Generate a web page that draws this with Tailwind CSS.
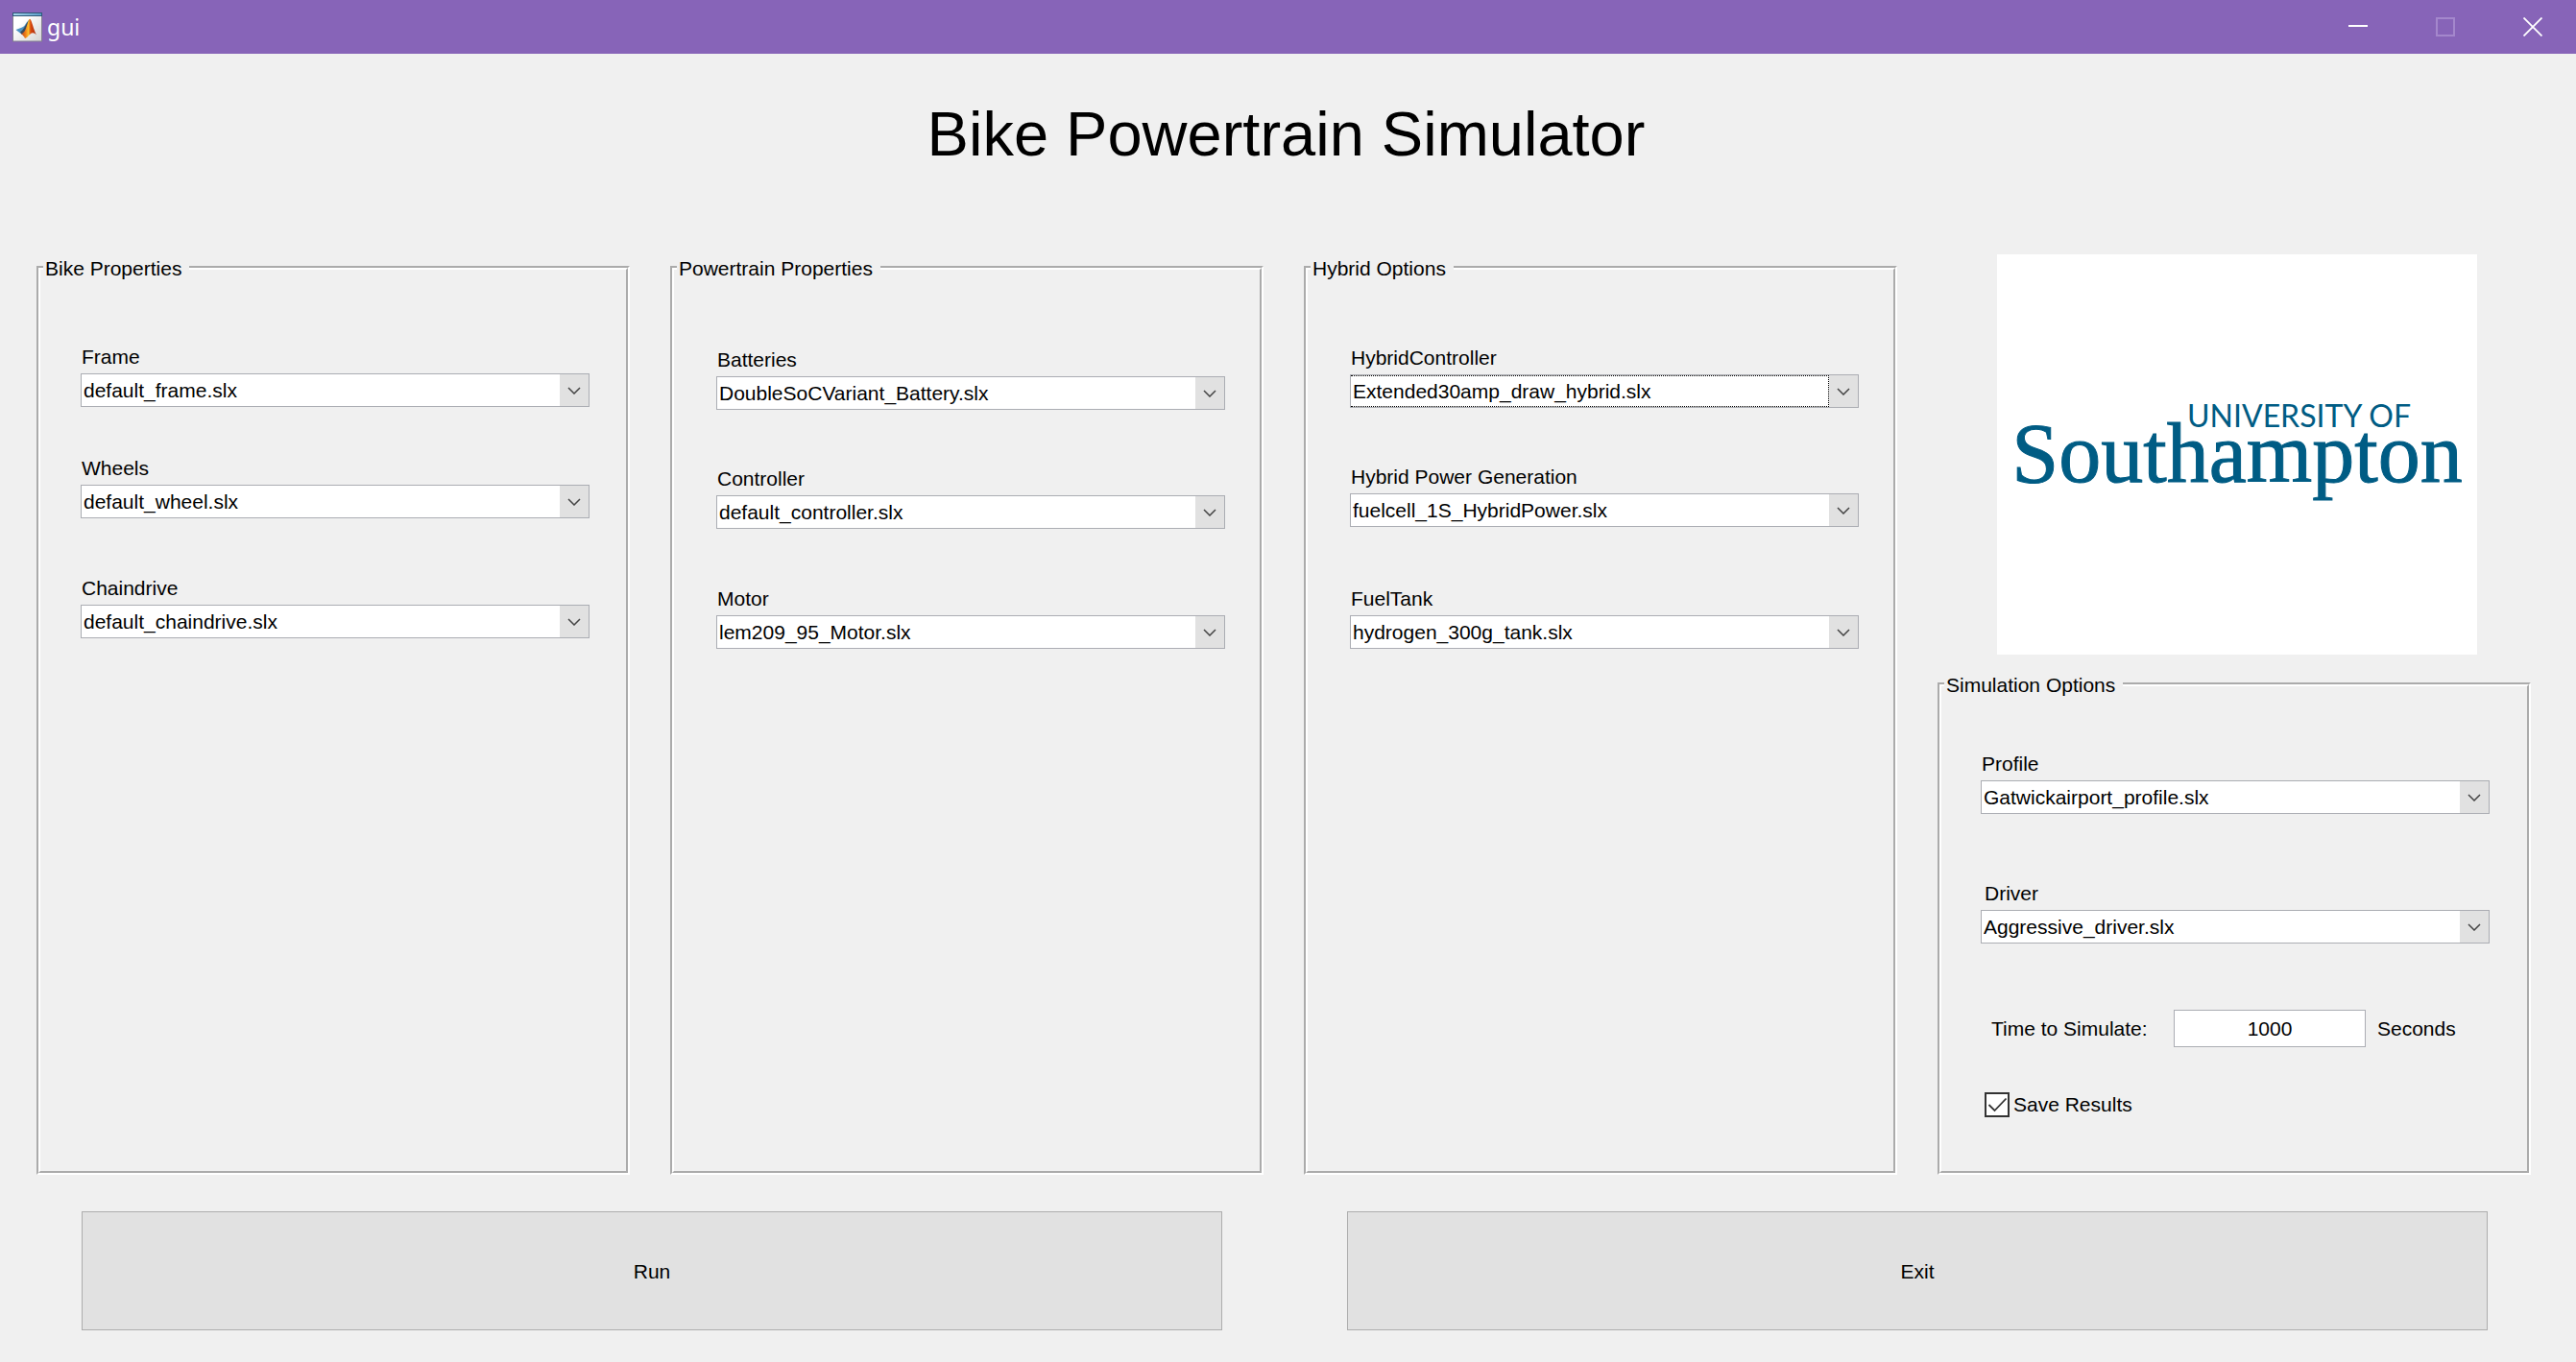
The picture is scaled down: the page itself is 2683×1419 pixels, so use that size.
<!DOCTYPE html>
<html lang="en">
<head>
<meta charset="utf-8">
<title>gui</title>
<script src="https://cdn.jsdelivr.net/npm/@tailwindcss/browser@4"></script>
</head>
<body class="flex min-h-screen flex-col bg-[#f0f0f0] font-['Liberation_Sans',Arial,sans-serif] text-[21px] leading-6 text-black">

<svg class="hidden" aria-hidden="true">
  <symbol id="chevron" viewBox="0 0 14 8"><path d="M1 1l6 6 6-6" fill="none" stroke="#444" stroke-width="1.5"/></symbol>
</svg>

<header class="flex h-14 items-center bg-[#8764b8] pl-[13px] text-white">
  <svg class="size-[31px]" viewBox="0 0 31 31" aria-hidden="true">
    <defs>
      <linearGradient id="paper" x1="0" y1="0" x2="1" y2="1"><stop offset=".3" stop-color="#fff"/><stop offset="1" stop-color="#d4d4d4"/></linearGradient>
      <linearGradient id="flame" x1="0" y1="0" x2="1" y2="0"><stop offset="0" stop-color="#b8401a"/><stop offset=".3" stop-color="#f0801a"/><stop offset=".48" stop-color="#fbc02c"/><stop offset=".62" stop-color="#d9480f"/><stop offset="1" stop-color="#a32a10"/></linearGradient>
      <linearGradient id="bar" x1="0" y1="0" x2="1" y2="0"><stop offset="0" stop-color="#a5d3ea"/><stop offset="1" stop-color="#5b9dc9"/></linearGradient>
    </defs>
    <rect x=".5" y=".5" width="30" height="29.5" fill="url(#paper)" stroke="#83808f"/>
    <rect x="0" y="0" width="31" height="4" fill="#2f5878"/>
    <rect x="1" y="1" width="29" height="2" fill="url(#bar)"/>
    <path d="M3.500 18l6.500-2.500c2-.5 3-2.500 5-5.500l3-3-5 13-3 3z" fill="#4b93c4"/>
    <path d="M8 20.500c3-2 5-6 7-9.500l3-4-5 14-3 2z" fill="#3a4a5c"/>
    <path d="M9 22.500c4-1.500 5-6 6.500-10.500 1-3 1.500-5.300 2.500-5.300s2 3.300 3 6.300 2 7 4 10.500c-2-2.500-4.500-3-6.500-1-2 1.500-3 4-5.500 4.500-1-2-2-3.500-4-4.500z" fill="url(#flame)"/>
  </svg>
  <span class="ml-[5px] font-['Noto_Sans',sans-serif] text-[23px] leading-8">gui</span>
  <div class="ml-auto flex self-stretch">
    <button type="button" aria-label="Minimize" class="flex w-[91px] items-center justify-center">
      <svg class="size-5" viewBox="0 0 20 20"><path d="M0 9h20" stroke="#fff" stroke-width="2"/></svg>
    </button>
    <button type="button" aria-label="Maximize" disabled class="flex w-[91px] items-center justify-center">
      <svg class="size-5" viewBox="0 0 20 20"><path d="M1 1h18v18H1z" fill="none" stroke="#a487cc" stroke-width="2"/></svg>
    </button>
    <button type="button" aria-label="Close" class="flex w-[91px] items-center justify-center">
      <svg class="size-5" viewBox="0 0 20 20"><path d="M.5.5l19 19M19.500.5l-19 19" stroke="#fff" stroke-width="1.800"/></svg>
    </button>
  </div>
</header>

<h1 class="mt-12 pr-1 text-center text-[65px] leading-[72px]">Bike Powertrain Simulator</h1>

<main class="mt-[89px] grid flex-1 grid-cols-4 gap-x-[42px] pr-[47px] pl-[38px]">

  <fieldset class="mt-px min-w-0 border-4 border-white [border-style:groove]">
    <legend class="ml-[3px] pt-0.5 pr-2 pl-0.5">Bike Properties</legend>
    <div class="flex flex-col pt-[68px] pr-[38px] pl-[42px]">
      <div class="flex flex-col gap-[5px]">
        <label for="frame" class="pl-px">Frame</label>
        <div class="grid">
          <select id="frame" class="col-start-1 row-start-1 h-[35px] appearance-none border border-[#abadb3] bg-white pl-0.5"><option>default_frame.slx</option></select>
          <span class="pointer-events-none col-start-1 row-start-1 my-px mr-px flex w-[30px] items-center justify-center justify-self-end bg-[#e1e1e1]"><svg class="h-2 w-3.5"><use href="#chevron"/></svg></span>
        </div>
      </div>
      <div class="mt-13 flex flex-col gap-[5px]">
        <label for="wheels" class="pl-px">Wheels</label>
        <div class="grid">
          <select id="wheels" class="col-start-1 row-start-1 h-[35px] appearance-none border border-[#abadb3] bg-white pl-0.5"><option>default_wheel.slx</option></select>
          <span class="pointer-events-none col-start-1 row-start-1 my-px mr-px flex w-[30px] items-center justify-center justify-self-end bg-[#e1e1e1]"><svg class="h-2 w-3.5"><use href="#chevron"/></svg></span>
        </div>
      </div>
      <div class="mt-[61px] flex flex-col gap-[5px]">
        <label for="chaindrive" class="pl-px">Chaindrive</label>
        <div class="grid">
          <select id="chaindrive" class="col-start-1 row-start-1 h-[35px] appearance-none border border-[#abadb3] bg-white pl-0.5"><option>default_chaindrive.slx</option></select>
          <span class="pointer-events-none col-start-1 row-start-1 my-px mr-px flex w-[30px] items-center justify-center justify-self-end bg-[#e1e1e1]"><svg class="h-2 w-3.5"><use href="#chevron"/></svg></span>
        </div>
      </div>
    </div>
  </fieldset>

  <fieldset class="mt-px min-w-0 border-4 border-white [border-style:groove]">
    <legend class="ml-[3px] pt-0.5 pr-2 pl-0.5">Powertrain Properties</legend>
    <div class="flex flex-col pt-[71px] pr-9 pl-11">
      <div class="flex flex-col gap-[5px]">
        <label for="batteries" class="pl-px">Batteries</label>
        <div class="grid">
          <select id="batteries" class="col-start-1 row-start-1 h-[35px] appearance-none border border-[#abadb3] bg-white pl-0.5"><option>DoubleSoCVariant_Battery.slx</option></select>
          <span class="pointer-events-none col-start-1 row-start-1 my-px mr-px flex w-[30px] items-center justify-center justify-self-end bg-[#e1e1e1]"><svg class="h-2 w-3.5"><use href="#chevron"/></svg></span>
        </div>
      </div>
      <div class="mt-15 flex flex-col gap-[5px]">
        <label for="controller" class="pl-px">Controller</label>
        <div class="grid">
          <select id="controller" class="col-start-1 row-start-1 h-[35px] appearance-none border border-[#abadb3] bg-white pl-0.5"><option>default_controller.slx</option></select>
          <span class="pointer-events-none col-start-1 row-start-1 my-px mr-px flex w-[30px] items-center justify-center justify-self-end bg-[#e1e1e1]"><svg class="h-2 w-3.5"><use href="#chevron"/></svg></span>
        </div>
      </div>
      <div class="mt-[61px] flex flex-col gap-[5px]">
        <label for="motor" class="pl-px">Motor</label>
        <div class="grid">
          <select id="motor" class="col-start-1 row-start-1 h-[35px] appearance-none border border-[#abadb3] bg-white pl-0.5"><option>lem209_95_Motor.slx</option></select>
          <span class="pointer-events-none col-start-1 row-start-1 my-px mr-px flex w-[30px] items-center justify-center justify-self-end bg-[#e1e1e1]"><svg class="h-2 w-3.5"><use href="#chevron"/></svg></span>
        </div>
      </div>
    </div>
  </fieldset>

  <fieldset class="mt-px min-w-0 border-4 border-white [border-style:groove]">
    <legend class="ml-[3px] pt-0.5 pr-2 pl-0.5">Hybrid Options</legend>
    <div class="flex flex-col pt-[69px] pr-9 pl-11">
      <div class="flex flex-col gap-[5px]">
        <label for="hybrid-controller" class="pl-px">HybridController</label>
        <div class="grid">
          <select id="hybrid-controller" class="col-start-1 row-start-1 h-[35px] appearance-none border border-[#abadb3] bg-white pl-0.5"><option>Extended30amp_draw_hybrid.slx</option></select>
          <span class="pointer-events-none col-start-1 row-start-1 my-px mr-[31px] ml-px border border-l-0 border-dotted border-black"></span>
          <span class="pointer-events-none col-start-1 row-start-1 my-px mr-px flex w-[30px] items-center justify-center justify-self-end bg-[#e1e1e1]"><svg class="h-2 w-3.5"><use href="#chevron"/></svg></span>
        </div>
      </div>
      <div class="mt-15 flex flex-col gap-[5px]">
        <label for="power-generation" class="pl-px">Hybrid Power Generation</label>
        <div class="grid">
          <select id="power-generation" class="col-start-1 row-start-1 h-[35px] appearance-none border border-[#abadb3] bg-white pl-0.5"><option>fuelcell_1S_HybridPower.slx</option></select>
          <span class="pointer-events-none col-start-1 row-start-1 my-px mr-px flex w-[30px] items-center justify-center justify-self-end bg-[#e1e1e1]"><svg class="h-2 w-3.5"><use href="#chevron"/></svg></span>
        </div>
      </div>
      <div class="mt-[63px] flex flex-col gap-[5px]">
        <label for="fuel-tank" class="pl-px">FuelTank</label>
        <div class="grid">
          <select id="fuel-tank" class="col-start-1 row-start-1 h-[35px] appearance-none border border-[#abadb3] bg-white pl-0.5"><option>hydrogen_300g_tank.slx</option></select>
          <span class="pointer-events-none col-start-1 row-start-1 my-px mr-px flex w-[30px] items-center justify-center justify-self-end bg-[#e1e1e1]"><svg class="h-2 w-3.5"><use href="#chevron"/></svg></span>
        </div>
      </div>
    </div>
  </fieldset>

  <div class="flex min-w-0 flex-col">
    <div class="mr-14 ml-[62px] flex h-[417px] flex-col bg-white pt-[152px] text-[#005c84]">
      <span class="pr-[69px] text-right font-[Lato,sans-serif] text-[32px] leading-8">UNIVERSITY OF</span>
      <span class="-mt-4 text-center font-['Liberation_Serif',serif] text-[88px] leading-[80px] [-webkit-text-stroke:1px_#005c84]">Southampton</span>
    </div>
    <fieldset class="mt-[18px] min-w-0 flex-1 border-4 border-white [border-style:groove]">
      <legend class="ml-[3px] pt-0.5 pr-2 pl-0.5">Simulation Options</legend>
      <div class="flex flex-col pt-[58px] pr-[39px] pl-[41px]">
        <div class="flex flex-col gap-[5px]">
          <label for="profile" class="pl-px">Profile</label>
          <div class="grid">
            <select id="profile" class="col-start-1 row-start-1 h-[35px] appearance-none border border-[#abadb3] bg-white pl-0.5"><option>Gatwickairport_profile.slx</option></select>
            <span class="pointer-events-none col-start-1 row-start-1 my-px mr-px flex w-[30px] items-center justify-center justify-self-end bg-[#e1e1e1]"><svg class="h-2 w-3.5"><use href="#chevron"/></svg></span>
          </div>
        </div>
        <div class="mt-[71px] flex flex-col gap-[5px]">
          <label for="driver" class="pl-1">Driver</label>
          <div class="grid">
            <select id="driver" class="col-start-1 row-start-1 h-[35px] appearance-none border border-[#abadb3] bg-white pl-0.5"><option>Aggressive_driver.slx</option></select>
            <span class="pointer-events-none col-start-1 row-start-1 my-px mr-px flex w-[30px] items-center justify-center justify-self-end bg-[#e1e1e1]"><svg class="h-2 w-3.5"><use href="#chevron"/></svg></span>
          </div>
        </div>
        <div class="mt-[69px] flex items-center pl-[11px]">
          <label for="time" class="w-[190px]">Time to Simulate:</label>
          <input id="time" type="text" value="1000" class="h-[39px] w-[200px] border border-[#abadb3] bg-white text-center">
          <span class="ml-3">Seconds</span>
        </div>
        <div class="mt-[47px] flex items-center gap-1 pl-1">
          <span class="grid size-[26px]">
            <input id="save" type="checkbox" checked class="peer col-start-1 row-start-1 appearance-none border-2 border-[#333] bg-white">
            <svg class="pointer-events-none invisible col-start-1 row-start-1 peer-checked:visible" viewBox="0 0 26 26" aria-hidden="true"><path d="M4.500 13l6 6L22.500 6.500" fill="none" stroke="#333" stroke-width="1.800"/></svg>
          </span>
          <label for="save">Save Results</label>
        </div>
      </div>
    </fieldset>
  </div>
</main>

<footer class="mt-[38px] mb-[33px] grid grid-cols-2 gap-x-[130px] pr-[92px] pl-[85px]">
  <button type="button" class="h-[124px] border border-[#adadad] bg-[#e1e1e1] pt-0.5">Run</button>
  <button type="button" class="h-[124px] border border-[#adadad] bg-[#e1e1e1] pt-0.5">Exit</button>
</footer>

</body>
</html>
